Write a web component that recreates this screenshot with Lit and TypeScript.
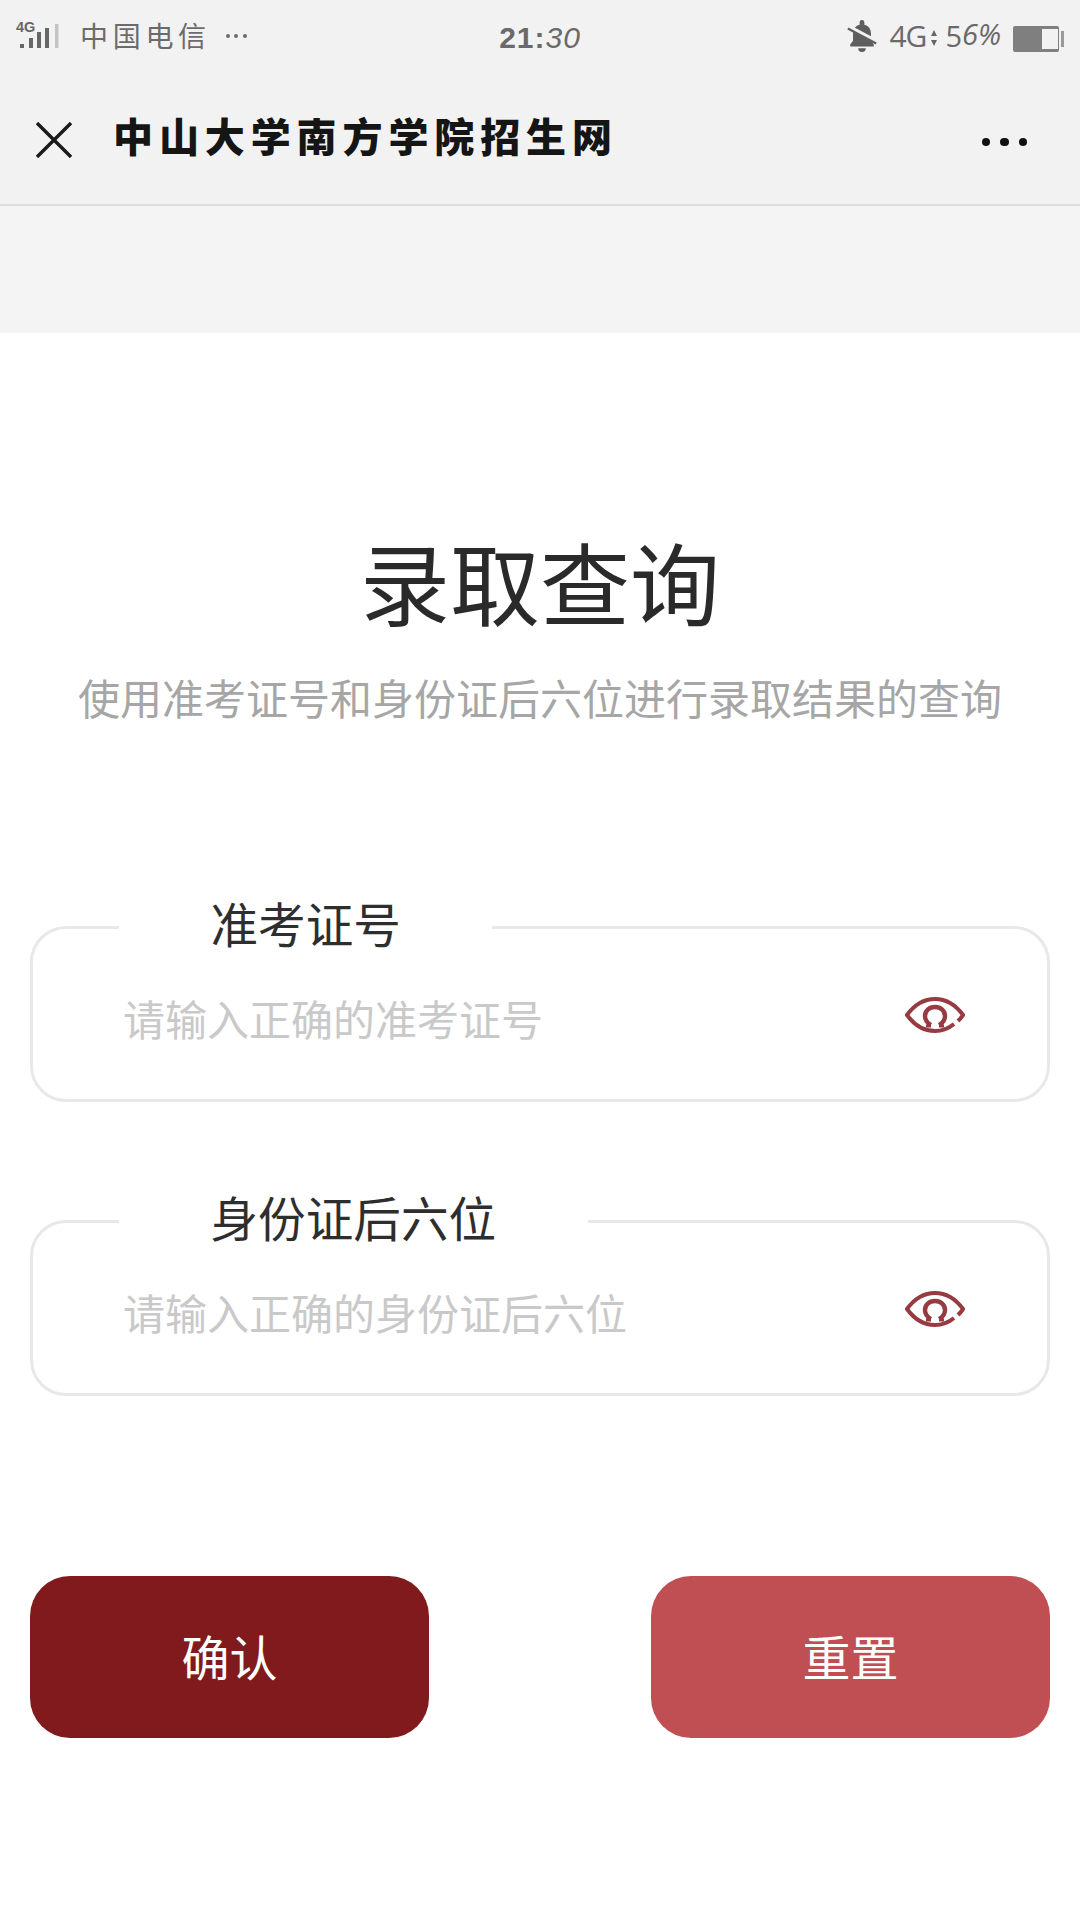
import { LitElement, html, css } from "lit";
import { customElement } from "lit/decorators.js";

const eye = html`<svg class="eye" viewBox="0 0 60 36" fill="none" stroke="#963b42" stroke-width="4">
  <path d="M49 27c-6 5-12 7-19 7C20 34 10 29 2 18 10 7 20 2 30 2s20 5 28 16c-1 2-3 4-5 6"/>
  <path d="M26 28c-4-2-6-5-6-9 0-5 4-9 10-9s10 4 10 9c0 4-2 7-6 9" stroke-width="4.4"/>
  <path d="M26 29h-5M34 29h5" stroke-width="3"/>
</svg>`;

@customElement("app-root")
export class AppRoot extends LitElement {
  static styles = css`
    :host {
      display: block;
      width: 1080px;
      height: 1920px;
      background: #fff;
      overflow: hidden;
      font-family: "Noto Sans CJK SC", "Noto Sans", sans-serif;
    }
    .top { background: #f2f2f2; }
    .status {
      height: 72px;
      display: grid;
      grid-template-columns: 1fr auto 1fr;
      align-items: center;
      padding: 0 16px;
      color: #666;
    }
    .left, .right { display: flex; align-items: center; }
    .right { justify-content: flex-end; }
    .carrier { font-size: 28px; letter-spacing: 4.7px; margin-left: 19px; line-height: 36px; color: #6b6b6b; transform: translateY(-1px); }
    .more-small { display: flex; gap: 4.5px; margin-left: 15px; }
    .more-small i { width: 4px; height: 4px; border-radius: 50%; background: #6b6b6b; }
    .time { font-family: "Liberation Sans", sans-serif; font-size: 30px; color: #6a6a6a; letter-spacing: 1px; transform: translateY(2px); }
    .time b { font-weight: 700; }
    .time i { font-style: italic; }
    .bell { width: 30px; height: 34px; }
    .net { font-family: "Open Sans", sans-serif; font-size: 30px; color: #6a6a6a; margin-left: 12px; line-height: 36px; letter-spacing: -1px; }
    .arrows { margin: 4px 8px 0 5px; }
    .pct { font-family: "Open Sans", sans-serif; font-size: 29px; color: #6a6a6a; line-height: 36px; letter-spacing: 0; display: flex; }
    .pct i { font-style: italic; transform: translateY(-2px); }
    .battery { display: flex; align-items: center; gap: 2px; margin-left: 12px; transform: translateY(3px); }
    .cell { width: 46px; height: 26px; background: #7f7f7f; border-radius: 2px; padding: 3px 1px 3px 29px; box-sizing: border-box; }
    .cell i { display: block; height: 100%; background: #f2f2f2; }
    .tip { width: 3px; height: 16px; background: #9a9a9a; }
    .nav {
      height: 134px;
      box-sizing: border-box;
      display: flex;
      align-items: center;
      padding: 0 53px 0 36px;
      border-bottom: 2px solid #dedede;
    }
    .close { width: 36px; height: 36px; flex: none; transform: translateY(2px); }
    .title { flex: 1; margin-left: 41px; font-size: 40px; font-weight: 900; letter-spacing: 5.9px; color: #151515; line-height: 50px; transform: translateY(-3px); }
    .dots { display: flex; gap: 10px; transform: translateY(4px); }
    .dots i { width: 8.5px; height: 8.5px; border-radius: 50%; background: #111; }
    .band { height: 127px; background: #f4f4f4; }

    main { padding: 0 30px; display: flex; flex-direction: column; }
    h1 { margin: 195px 0 0; text-align: center; font-size: 90px; font-weight: 400; line-height: 104px; color: #2a2a2a; }
    .sub { margin: 35px 0 0; text-align: center; font-size: 42px; line-height: 60px; color: #a6a6a6; }

    fieldset {
      margin: 0;
      padding: 0 82px 0 90px;
      border: 3px solid #e8e8ea;
      border-radius: 36px;
      height: 209px;
      box-sizing: border-box;
      display: flex;
      justify-content: space-between;
      align-items: flex-start;
    }
    .first { margin-top: 166px; }
    .second { margin-top: 85px; }
    legend {
      margin-left: -4px;
      padding: 0 91.5px 8px;
      font-size: 47.6px;
      line-height: 60px;
      color: #2e2e2e;
    }
    .field-body { display: flex; justify-content: space-between; width: 100%; }
    .ph { font-size: 42px; line-height: 60px; color: #c9c9c9; margin-top: 27px; }
    .eye { width: 60px; height: 36px; margin-top: 36px; }

    .buttons { display: flex; justify-content: space-between; margin-top: 180px; }
    button {
      width: 399px;
      height: 162px;
      border: 0;
      border-radius: 40px;
      color: #fff;
      font: inherit;
      font-size: 48px;
      padding: 0 0 5px;
    }
    .ok { background: #801a1d; }
    .reset { background: #c04f53; }
  `;

  render() {
    return html`
      <div class="top">
        <div class="status">
          <div class="left">
            <svg width="45" height="36" viewBox="0 0 45 36">
              <text x="0" y="14" font-family="Liberation Sans, sans-serif" font-size="14.5" font-weight="700" fill="#666">4G</text>
              <g fill="#666"><rect x="4" y="26" width="4" height="4"/><rect x="13" y="20" width="4" height="10"/><rect x="21" y="14" width="4" height="16"/><rect x="29" y="10" width="4" height="20"/></g>
              <rect x="39" y="6" width="3.5" height="24" fill="#c4c4c4"/>
            </svg>
            <span class="carrier">中国电信</span>
            <span class="more-small"><i></i><i></i><i></i></span>
          </div>
          <div class="time"><b>21:</b><i>30</i></div>
          <div class="right">
            <svg class="bell" viewBox="0 0 30 36">
              <path fill="#5e5e5e" d="M15 1a2.5 2.5 0 0 1 2.5 2.5V6c5 1 7 5 7 10v7l3 4v2H2.500v-2l3-4v-7c0-5 2-9 7-10V3.500A2.500 2.500 0 0 1 15 1zM11 31h8a4 4 0 0 1-8 0z"/>
              <path d="M0 8l30 16" stroke="#f2f2f2" stroke-width="5"/>
              <path d="M0 10l30 16" stroke="#5e5e5e" stroke-width="2.400"/>
            </svg>
            <span class="net">4G</span>
            <svg class="arrows" width="6" height="16" viewBox="0 0 6 16"><path fill="#666" d="M3 0l3 6H0zM3 16l3-6H0z"/></svg>
            <span class="pct">5<i>6%</i></span>
            <div class="battery"><div class="cell"><i></i></div><div class="tip"></div></div>
          </div>
        </div>
        <div class="nav">
          <svg class="close" viewBox="0 0 36 36" stroke="#1a1a1a" stroke-width="3.4"><path d="M1 1l34 34M35 1L1 35"/></svg>
          <div class="title">中山大学南方学院招生网</div>
          <div class="dots"><i></i><i></i><i></i></div>
        </div>
        <div class="band"></div>
      </div>
      <main>
        <h1>录取查询</h1>
        <p class="sub">使用准考证号和身份证后六位进行录取结果的查询</p>
        <fieldset class="first">
          <legend>准考证号</legend>
          <div class="field-body"><span class="ph">请输入正确的准考证号</span>${eye}</div>
        </fieldset>
        <fieldset class="second">
          <legend>身份证后六位</legend>
          <div class="field-body"><span class="ph">请输入正确的身份证后六位</span>${eye}</div>
        </fieldset>
        <div class="buttons">
          <button class="ok">确认</button>
          <button class="reset">重置</button>
        </div>
      </main>
    `;
  }
}
